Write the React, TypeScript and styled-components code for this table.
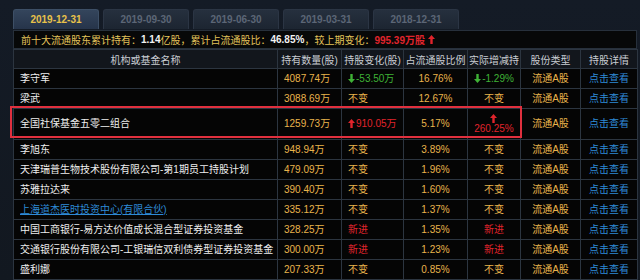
import styled, { createGlobalStyle } from "styled-components";

const GlobalStyle = createGlobalStyle`
    body {
        margin: 0;
        background: #131922;
        font-family: "Liberation Sans", "Noto Sans CJK SC", sans-serif;
    }
`

const Page = styled.div`
    width: 640px;
    height: 280px;
    overflow: hidden;
    padding: 9px 0 0 13px;
    box-sizing: border-box;
    background: linear-gradient(180deg, #141b26 0%, #121820 100%);
`

const Tabs = styled.div`
    display: flex;
    gap: 4px;
    height: 20px;
`

const Tab = styled.div<{ $active?: boolean }>`
    width: 86px;
    display: flex;
    align-items: center;
    justify-content: center;
    border-radius: 3px 3px 0 0;
    font-size: 10px;
    font-weight: bold;
    color: ${p => p.$active ? "#e8c24a" : "#5c6676"};
    background: ${p => p.$active
        ? "linear-gradient(180deg, #34455c 0%, #26344a 100%)"
        : "linear-gradient(180deg, #26303e 0%, #1c2531 100%)"};
    border: 1px solid ${p => p.$active ? "#3d4f66" : "#2b3544"};
    border-bottom: none;
    box-sizing: border-box;
`

const Panel = styled.div`
    position: relative;
    width: 624px;
    margin-top: 1px;
`

const InfoBar = styled.div`
    height: 19px;
    display: flex;
    align-items: center;
    padding-left: 7px;
    background: #070808;
    border: 1px solid #27303b;
    box-sizing: border-box;
    font-size: 10px;
    color: #e3c35a;
    white-space: nowrap;
`

const Strong = styled.span`
    color: #f2f2f2;
    font-weight: bold;
`

const RedStrong = styled.span`
    color: #e0242c;
    font-weight: bold;
`

const Table = styled.table`
    width: 624px;
    border-collapse: collapse;
    table-layout: fixed;
    font-size: 10px;
`

const Th = styled.th`
    height: 18px;
    padding: 0;
    font-weight: normal;
    color: #c9cdd3;
    background: #12161c;
    border: 1px solid #2c3540;
    text-align: center;
    white-space: nowrap;
`

const Td = styled.td<{ $align?: "left" | "center"; $color?: string; $tall?: boolean }>`
    height: ${p => p.$tall ? "30px" : "19px"};
    padding: 0 ${p => p.$align === "left" ? "0 0 6px" : "0"};
    padding-left: ${p => p.$align === "left" ? "6px" : "0"};
    background: #050505;
    border: 1px solid #2c3540;
    color: ${p => p.$color ?? "#e9b44c"};
    text-align: ${p => p.$align ?? "center"};
    white-space: nowrap;
    line-height: 12px;
`

const Link = styled.a<{ $under?: boolean }>`
    color: #2e8ad6;
    text-decoration: ${p => p.$under ? "underline" : "none"};
`

const Arrow = styled.svg`
    width: 7px;
    height: 9px;
    vertical-align: -1px;
    margin-right: 1px;
`

const Stack = styled.div`
    display: flex;
    flex-direction: column;
    align-items: center;
`

const Mark = styled.div`
    position: absolute;
    left: -3px;
    top: 76px;
    width: 512px;
    height: 32px;
    border: 2px solid #e0303e;
    box-sizing: border-box;
    pointer-events: none;
`

const Up = ({ color = "#e0242c" }: { color?: string }) => (
    <Arrow viewBox="0 0 7 9">
        <path d="M3.5 0 L7 4 L4.7 4 L4.7 9 L2.3 9 L2.3 4 L0 4 Z" fill={color} />
    </Arrow>
)

const Down = ({ color = "#3fb236" }: { color?: string }) => (
    <Arrow viewBox="0 0 7 9">
        <path d="M3.5 9 L7 5 L4.7 5 L4.7 0 L2.3 0 L2.3 5 L0 5 Z" fill={color} />
    </Arrow>
)

type Row = {
    name: string
    qty: string
    change: string
    ratio: string
    actual: string
    kind?: "down" | "up" | "new" | "same"
    link?: boolean
}

const rows: Row[] = [
    { name: "李守军", qty: "4087.74万", change: "-53.50万", ratio: "16.76%", actual: "-1.29%", kind: "down" },
    { name: "梁武", qty: "3088.69万", change: "不变", ratio: "12.67%", actual: "不变", kind: "same" },
    { name: "全国社保基金五零二组合", qty: "1259.73万", change: "910.05万", ratio: "5.17%", actual: "260.25%", kind: "up" },
    { name: "李旭东", qty: "948.94万", change: "不变", ratio: "3.89%", actual: "不变", kind: "same" },
    { name: "天津瑞普生物技术股份有限公司-第1期员工持股计划", qty: "479.09万", change: "不变", ratio: "1.96%", actual: "不变", kind: "same" },
    { name: "苏雅拉达来", qty: "390.40万", change: "不变", ratio: "1.60%", actual: "不变", kind: "same" },
    { name: "上海道杰医时投资中心(有限合伙)", qty: "335.12万", change: "不变", ratio: "1.37%", actual: "不变", kind: "same", link: true },
    { name: "中国工商银行-易方达价值成长混合型证券投资基金", qty: "328.25万", change: "新进", ratio: "1.35%", actual: "新进", kind: "new" },
    { name: "交通银行股份有限公司-工银瑞信双利债券型证券投资基金", qty: "300.00万", change: "新进", ratio: "1.23%", actual: "新进", kind: "new" },
    { name: "盛利娜", qty: "207.33万", change: "不变", ratio: "0.85%", actual: "不变", kind: "same" },
]

const tabs = ["2019-12-31", "2019-09-30", "2019-06-30", "2019-03-31", "2018-12-31"]

const Change = ({ row }: { row: Row }) => {
    if (row.kind === "down") return <><Down />{row.change}</>
    if (row.kind === "up") return <><Up />{row.change}</>
    return <>{row.change}</>
}

const Actual = ({ row }: { row: Row }) => {
    if (row.kind === "down") return <><Down />{row.actual}</>
    if (row.kind === "up") return <Stack><Up /><span>{row.actual}</span></Stack>
    return <>{row.actual}</>
}

const changeColor = (row: Row) => {
    if (row.kind === "down") return "#3fb236"
    if (row.kind === "up" || row.kind === "new") return "#e0242c"
    return "#e9b44c"
}

export default function App() {
    return (
        <Page>
            <GlobalStyle />
            <Tabs>
                {tabs.map((t, i) => <Tab key={t} $active={i === 0}>{t}</Tab>)}
            </Tabs>
            <Panel>
                <InfoBar>
                    前十大流通股东累计持有：<Strong>1.14</Strong>亿股，累计占流通股比：<Strong>46.85%</Strong>，较上期变化：<RedStrong>995.39万股</RedStrong>&nbsp;<Up />
                </InfoBar>
                <Table>
                    <colgroup>
                        <col style={{ width: 264 }} />
                        <col style={{ width: 64 }} />
                        <col style={{ width: 62 }} />
                        <col style={{ width: 64 }} />
                        <col style={{ width: 53 }} />
                        <col style={{ width: 60 }} />
                        <col style={{ width: 57 }} />
                    </colgroup>
                    <thead>
                        <tr>
                            <Th>机构或基金名称</Th>
                            <Th>持有数量(股)</Th>
                            <Th>持股变化(股)</Th>
                            <Th>占流通股比例</Th>
                            <Th>实际增减持</Th>
                            <Th>股份类型</Th>
                            <Th>持股详情</Th>
                        </tr>
                    </thead>
                    <tbody>
                        {rows.map((row) => (
                            <tr key={row.name}>
                                <Td $align="left" $color="#eeeeee" $tall={row.kind === "up"}>
                                    {row.link ? <Link $under>{row.name}</Link> : row.name}
                                </Td>
                                <Td $align="left">{row.qty}</Td>
                                <Td $align="left" $color={changeColor(row)}><Change row={row} /></Td>
                                <Td>{row.ratio}</Td>
                                <Td $color={changeColor(row)}><Actual row={row} /></Td>
                                <Td>流通A股</Td>
                                <Td><Link>点击查看</Link></Td>
                            </tr>
                        ))}
                    </tbody>
                </Table>
                <Mark />
            </Panel>
        </Page>
    )
}
